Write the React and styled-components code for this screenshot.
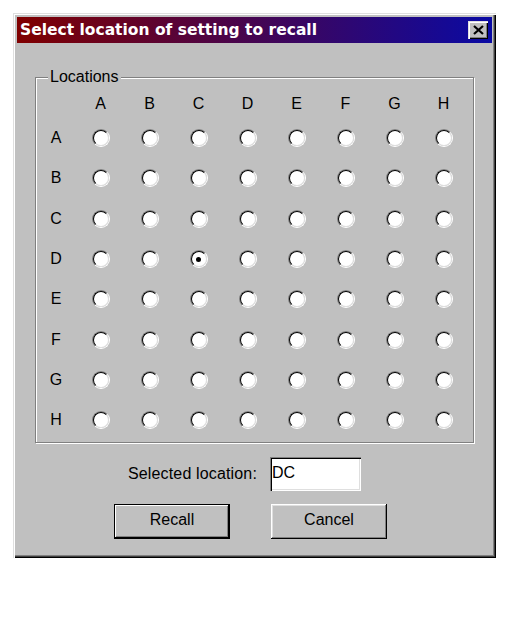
import React from 'react';
import styled, { createGlobalStyle } from 'styled-components';

const GlobalStyle = createGlobalStyle`
  html, body {
    margin: 0;
    padding: 0;
    background: #fff;
  }
  body {
    font-family: "Liberation Sans", Arial, sans-serif;
    color: #000;
  }
`;

const Page = styled.div`
  padding: 13px 0 0 13px;
`;

const Window = styled.div`
  box-sizing: border-box;
  width: 483px;
  height: 545px;
  padding: 4px;
  background: #c0c0c0;
  display: flex;
  flex-direction: column;
  box-shadow: inset 1px 1px 0 #dfdfdf, inset 2px 2px 0 #fff,
    inset -1px -1px 0 #000, inset -2px -2px 0 #404040,
    inset -3px -3px 0 #808080;
`;

const TitleBar = styled.div`
  height: 26px;
  display: flex;
  align-items: center;
  justify-content: space-between;
  padding: 0 4px 0 3px;
  background: linear-gradient(to right, #800000, #0a0aa4);
`;

const Title = styled.span`
  color: #fff;
  font: bold 15.5px "DejaVu Sans", Tahoma, sans-serif;
  white-space: nowrap;
`;

const CloseButton = styled.button`
  width: 20px;
  height: 18px;
  padding: 0;
  border: 0;
  background: #c0c0c0;
  display: flex;
  align-items: center;
  justify-content: center;
  box-shadow: inset 1px 1px 0 #dfdfdf, inset 2px 2px 0 #fff,
    inset -1px -1px 0 #000, inset -2px -2px 0 #808080;
`;

const Body = styled.div`
  flex: 1;
  display: flex;
  flex-direction: column;
  padding: 25px 18px 0 18px;
  font-size: 16px;
`;

const Group = styled.fieldset`
  box-sizing: border-box;
  width: 439px;
  margin: 0;
  padding: 4px 0 2px 0;
  border: 1px solid #808080;
  box-shadow: inset 1px 1px 0 #fff, 1px 1px 0 #fff;
`;

const Legend = styled.legend`
  margin-left: 12px;
  padding: 0 2px;
  font-size: 16px;
  line-height: 18px;
  background: #c0c0c0;
`;

const Grid = styled.div`
  display: grid;
  grid-template-columns: 40px repeat(8, 49px);
  grid-template-rows: 28px repeat(8, 40.3px);
  align-items: center;
  justify-items: center;
`;

const Letter = styled.span`
  font-size: 16px;
  line-height: 18px;
`;

const RadioOuter = styled.span`
  box-sizing: border-box;
  width: 18px;
  height: 18px;
  border-radius: 50%;
  border: 1px solid;
  border-color: #808080 #fff #fff #808080;
  display: flex;
`;

const RadioInner = styled.span`
  box-sizing: border-box;
  flex: 1;
  border-radius: 50%;
  border: 1.5px solid;
  border-color: #000 #dfdfdf #dfdfdf #000;
  background: #fff;
  display: flex;
  align-items: center;
  justify-content: center;
`;

const Dot = styled.span`
  width: 5px;
  height: 5px;
  border-radius: 50%;
  background: #000;
`;

const FieldRow = styled.div`
  display: flex;
  align-items: center;
  gap: 13px;
  margin-top: 14px;
  padding-left: 93px;
`;

const Label = styled.span`
  font-size: 16px;
  letter-spacing: 0.15px;
`;

const TextBox = styled.div`
  box-sizing: border-box;
  width: 91px;
  height: 34px;
  padding: 7px 2px 0;
  line-height: 18px;
  background: #fff;
  box-shadow: inset 1px 1px 0 #808080, inset 2px 2px 0 #000,
    inset -1px -1px 0 #fff, inset -2px -2px 0 #dfdfdf;
`;

const ButtonRow = styled.div`
  display: flex;
  gap: 41px;
  margin-top: 13px;
  padding-left: 79px;
`;

const Button = styled.button`
  box-sizing: border-box;
  width: 116px;
  height: 35px;
  padding: 0 0 3px;
  border: 0;
  background: #c0c0c0;
  font: 16px "Liberation Sans", Arial, sans-serif;
  color: #000;
  box-shadow: ${(p) =>
    p.$default
      ? 'inset 0 0 0 1px #000, inset -2px -2px 0 #000, inset 2px 2px 0 #fff, inset -3px -3px 0 #808080'
      : 'inset -1px -1px 0 #000, inset 1px 1px 0 #fff, inset -2px -2px 0 #808080, inset 2px 2px 0 #dfdfdf'};
`;

const LETTERS = ['A', 'B', 'C', 'D', 'E', 'F', 'G', 'H'];

const Radio = ({ checked }) => (
  <RadioOuter>
    <RadioInner>{checked && <Dot />}</RadioInner>
  </RadioOuter>
);

const App = () => {
  const selected = 'DC';
  return (
    <Page>
      <GlobalStyle />
      <Window>
        <TitleBar>
          <Title>Select location of setting to recall</Title>
          <CloseButton aria-label="Close">
            <svg width="11" height="10" viewBox="0 0 11 10">
              <path d="M1 1 L10 9 M10 1 L1 9" stroke="#000" strokeWidth="2.2" />
            </svg>
          </CloseButton>
        </TitleBar>
        <Body>
          <Group>
            <Legend>Locations</Legend>
            <Grid>
              <span />
              {LETTERS.map((c) => (
                <Letter key={c}>{c}</Letter>
              ))}
              {LETTERS.map((r) => (
                <React.Fragment key={r}>
                  <Letter>{r}</Letter>
                  {LETTERS.map((c) => (
                    <Radio key={c} checked={r + c === selected} />
                  ))}
                </React.Fragment>
              ))}
            </Grid>
          </Group>
          <FieldRow>
            <Label>Selected location:</Label>
            <TextBox>{selected}</TextBox>
          </FieldRow>
          <ButtonRow>
            <Button $default>Recall</Button>
            <Button>Cancel</Button>
          </ButtonRow>
        </Body>
      </Window>
    </Page>
  );
};

export default App;
